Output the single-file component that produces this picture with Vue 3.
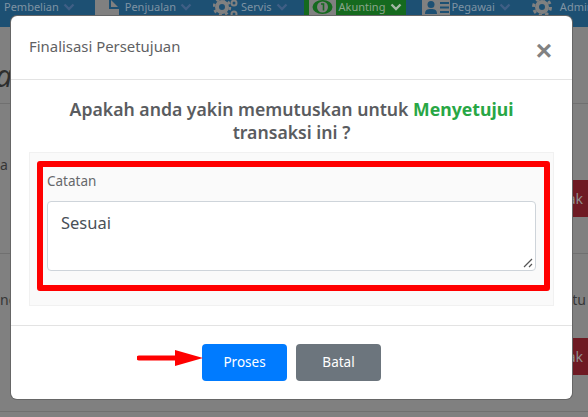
<script setup>
</script>

<template>
  <div class="page">
    <nav class="nav">
      <span class="item first">Pembelian<svg class="chev dim" viewBox="0 0 12 8"><path d="M1.500 1.500 6 6l4.500-4.500" /></svg></span>
      <span class="item doc">
        <svg class="ico-doc" viewBox="0 0 24 28"><path d="M0 0h15l9 9v19H0z" fill="#808080" /><path d="M15 0v9h9" fill="none" stroke="#1d5073" stroke-width="2" /></svg>
        <span class="lab">Penjualan</span><svg class="chev dim" viewBox="0 0 12 8"><path d="M1.500 1.500 6 6l4.500-4.500" /></svg>
      </span>
      <span class="item servis">
        <svg class="ico-gears" viewBox="0 0 26 18"><g fill="none" stroke="#808080"><circle cx="9" cy="7" r="5" stroke-width="4" /><circle cx="9" cy="7" r="8" stroke-width="2.500" stroke-dasharray="3 3.300" /><circle cx="21" cy="3" r="2.500" stroke-width="2" /><circle cx="21" cy="14" r="2.500" stroke-width="2" /></g></svg>
        <span class="lab">Servis</span><svg class="chev dim" viewBox="0 0 12 8"><path d="M1.500 1.500 6 6l4.500-4.500" /></svg>
      </span>
      <span class="item active">
        <svg class="ico-money" viewBox="0 0 27 16"><rect width="27" height="16" fill="#808080" /><ellipse cx="13.500" cy="7" rx="10" ry="7" fill="#156a1e" /><circle cx="13.500" cy="7" r="5.500" fill="#808080" /><path d="M12 4h2.500v6.500" fill="none" stroke="#156a1e" stroke-width="1.600" /></svg>
        <span class="lab">Akunting</span><svg class="chev bright" viewBox="0 0 12 8"><path d="M1.500 1.500 6 6l4.500-4.500" /></svg>
      </span>
      <span class="item pegawai">
        <svg class="ico-user" viewBox="0 0 28 16"><rect width="28" height="16" fill="#808080" /><circle cx="9" cy="4.500" r="3.500" fill="#1d5073" /><path d="M3 14c0-4 2-5 6-5s6 1 6 5z" fill="#1d5073" /><path d="M18 3h9M18 7.500h9M18 12h9" stroke="#1d5073" stroke-width="2" /></svg>
        <span class="lab">Pegawai</span><svg class="chev dim" viewBox="0 0 12 8"><path d="M1.500 1.500 6 6l4.500-4.500" /></svg>
      </span>
      <span class="item admin">
        <svg class="ico-gear" viewBox="0 0 20 20"><g fill="none" stroke="#808080"><circle cx="10" cy="10" r="5" stroke-width="4" /><circle cx="10" cy="10" r="8.500" stroke-width="3" stroke-dasharray="3.400 3.270" /></g></svg>
        <span class="lab">Admin</span>
      </span>
    </nav>

    <main class="content">
      <div class="page-title">ra</div>
      <div class="row row-a">
        <span class="cell">a</span>
        <span class="danger">Cetak</span>
      </div>
      <div class="row row-b">
        <span class="cell">nc</span>
        <span class="tail">
          <span class="cell">itu</span>
          <span class="danger">Cetak</span>
        </span>
      </div>
    </main>

    <section class="modal">
      <header class="modal-head">
        <h5 class="modal-title">Finalisasi Persetujuan</h5>
        <span class="close">×</span>
      </header>
      <div class="modal-body">
        <h4 class="question">Apakah anda yakin memutuskan untuk <b class="ok">Menyetujui</b><br />transaksi ini ?</h4>
        <div class="panel">
          <div class="mark">
            <label class="lbl">Catatan</label>
            <div class="area">
              <span>Sesuai</span>
              <svg class="grip" viewBox="0 0 10 10"><path d="M1 9 9 1M6 9l3-3" stroke="#555" stroke-width="1.200" /></svg>
            </div>
          </div>
        </div>
      </div>
      <footer class="modal-foot">
        <svg class="arrow" viewBox="0 0 66 16"><path d="M2 8h40" stroke="#f00" stroke-width="5" stroke-linecap="round" /><path d="M38 0l28 8-28 8z" fill="#f00" /></svg>
        <button class="btn primary">Proses</button>
        <button class="btn secondary">Batal</button>
      </footer>
    </section>
  </div>
</template>

<style scoped>
.page {
  position: relative;
  width: 588px;
  height: 417px;
  overflow: hidden;
  background: #808080;
  font-family: "Noto Sans", "Open Sans", sans-serif;
}
.nav {
  display: flex;
  align-items: flex-start;
  height: 27px;
  background: #1d5073;
  color: #7f93a3;
  font-size: 11px;
  line-height: 13px;
  white-space: nowrap;
  overflow: hidden;
}
.item {
  display: flex;
  align-items: flex-start;
  flex: none;
}
.first { margin-left: 4px; }
.doc { margin-left: 20px; }
.servis { margin-left: 21px; }
.active {
  margin-left: 16px;
  padding: 0 4px 0 5px;
  height: 16px;
  background: #156a1e;
  color: #8aa58c;
}
.pegawai { margin-left: 16px; }
.admin { margin-left: 21px; }
.chev {
  width: 12px;
  height: 8px;
  margin: 3px 0 0 4px;
  fill: none;
  stroke-width: 2.400;
}
.dim { stroke: #3f5f85; }
.bright { stroke: #a3b8a5; margin-left: 5px; }
.ico-doc { width: 24px; height: 28px; margin-right: 6px; margin-top: -1px; }
.ico-gears { width: 26px; height: 18px; margin-right: 2px; }
.ico-money { width: 27px; height: 16px; margin-right: 3px; }
.ico-user { width: 28px; height: 16px; margin-right: 1px; }
.ico-gear { width: 20px; height: 20px; margin-right: 8px; margin-top: -3px; }
.content { color: #333; }
.page-title {
  height: 77px;
  padding-top: 32px;
  box-sizing: border-box;
  margin-left: -16px;
  font-size: 30px;
  line-height: 34px;
  font-style: italic;
  color: #2e2e2e;
  border-bottom: 1px solid #707070;
}
.row {
  display: flex;
  justify-content: space-between;
  align-items: flex-start;
  box-sizing: border-box;
  border-bottom: 1px solid #707070;
  color: #363636;
  font-size: 14px;
  line-height: 18px;
}
.row-a { height: 150px; }
.row-b { height: 158px; }
.row-a .cell { margin-top: 52px; }
.row-a .danger { margin-top: 76px; }
.row-b > .cell { margin-top: 37px; }
.tail {
  display: flex;
  flex-direction: column;
  align-items: flex-end;
  gap: 29px;
  margin-top: 37px;
}
.tail .cell { margin-right: 2px; }
.danger {
  display: block;
  width: 70px;
  height: 37px;
  padding-right: 5px;
  box-sizing: border-box;
  background: #6e1a23;
  color: #8f8f8f;
  line-height: 37px;
  font-size: 14px;
  text-align: right;
}
.modal {
  position: absolute;
  left: 11px;
  top: 16px;
  width: 561px;
  height: 383px;
  display: flex;
  flex-direction: column;
  box-sizing: border-box;
  background: #fff;
  border-radius: 6px;
  box-shadow: 0 0 0 1px #666;
  color: #5a5c60;
}
.modal-head {
  display: flex;
  justify-content: space-between;
  align-items: flex-start;
  height: 64px;
  box-sizing: border-box;
  padding: 20px 18px 0;
  border-bottom: 1px solid #e3e3e3;
}
.modal-title {
  margin: 0;
  font-size: 14.900px;
  font-weight: 400;
  line-height: 20px;
  color: #5f6163;
}
.close {
  margin-top: -3px;
  margin-right: 2px;
  font-family: "Liberation Sans", sans-serif;
  font-size: 28px;
  font-weight: 700;
  line-height: 36px;
  color: #828282;
}
.modal-body {
  flex: 1;
  padding: 18px 18px 0;
}
.question {
  margin: 0;
  text-align: center;
  font-size: 17.650px;
  font-weight: 600;
  line-height: 23px;
  color: #5a5c60;
}
.ok { color: #28a745; font-weight: 700; }
.panel {
  margin-top: 8px;
  box-sizing: border-box;
  height: 154px;
  padding: 8px 3px 0 7px;
  background: #fafafa;
  border: 1px solid #f1f1f1;
}
.mark {
  box-sizing: border-box;
  height: 130px;
  padding: 6px 8px 0 4px;
  border: 6px solid #f00;
  border-radius: 3px;
}
.lbl {
  display: block;
  margin-bottom: 11px;
  font-size: 13.500px;
  line-height: 17px;
  color: #66686b;
}
.area {
  position: relative;
  height: 70px;
  box-sizing: border-box;
  padding: 7px 13px;
  background: #fff;
  border: 1px solid #ced4da;
  border-radius: 4px;
  font-size: 16.500px;
  line-height: 27px;
  color: #495057;
}
.grip {
  position: absolute;
  right: 2px;
  bottom: 2px;
  width: 10px;
  height: 10px;
}
.modal-foot {
  position: relative;
  display: flex;
  justify-content: center;
  align-items: center;
  gap: 9px;
  height: 74px;
  padding-bottom: 1px;
  box-sizing: border-box;
  border-top: 1px solid #e3e3e3;
}
.arrow {
  position: absolute;
  left: 126px;
  top: 24px;
  width: 66px;
  height: 16px;
}
.btn {
  width: 85px;
  height: 37px;
  border: 0;
  border-radius: 4px;
  font-family: inherit;
  font-size: 13.500px;
  color: #fff;
}
.primary { background: #007bff; }
.secondary { background: #6c757d; }
</style>
